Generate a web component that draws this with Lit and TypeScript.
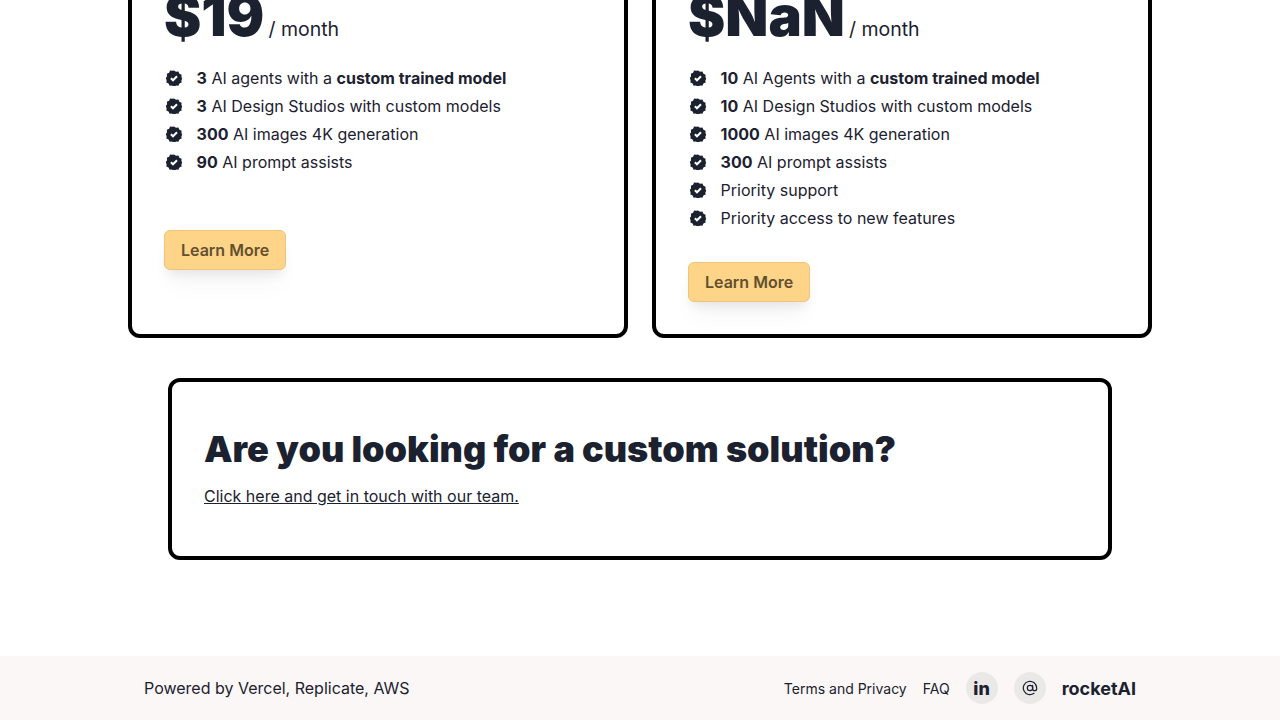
import { LitElement, html, css } from 'lit';
import { customElement } from 'lit/decorators.js';

type Feature = { lead?: string; text: string; strong?: string };

const basic: Feature[] = [
  { lead: '3', text: ' AI agents with a ', strong: 'custom trained model' },
  { lead: '3', text: ' AI Design Studios with custom models' },
  { lead: '300', text: ' AI images 4K generation' },
  { lead: '90', text: ' AI prompt assists' },
];

const pro: Feature[] = [
  { lead: '10', text: ' AI Agents with a ', strong: 'custom trained model' },
  { lead: '10', text: ' AI Design Studios with custom models' },
  { lead: '1000', text: ' AI images 4K generation' },
  { lead: '300', text: ' AI prompt assists' },
  { text: 'Priority support' },
  { text: 'Priority access to new features' },
];

// scalloped check badge
const badge = html`<svg class="check" viewBox="0 0 16 16" aria-hidden="true">
  <path
    fill="#1c2130"
    d="M8 0.4l2 1.4 2.4-.2 1 2.2 2.2 1-.2 2.4 1.2 1-1.2 2 .2 2.4-2.2 1-1 2.2-2.4-.2-2 1.4-2-1.4-2.4.2-1-2.2-2.2-1 .2-2.4L-.3 8.2l1.4-2-.2-2.4 2.2-1 1-2.2 2.4.2z"
  />
  <path d="M4.9 8.2l2.1 2.1 4-4.1" fill="none" stroke="#fff" stroke-width="2" />
</svg>`;

const atSign = html`<svg class="at" viewBox="0 0 24 24" aria-hidden="true">
  <circle cx="12" cy="12" r="4" />
  <path d="M16 8v5a3 3 0 0 0 6 0v-1a10 10 0 1 0-4 8" />
</svg>`;

@customElement('app-root')
export class AppRoot extends LitElement {
  static styles = css`
    :host {
      display: block;
      height: 720px;
      overflow: hidden;
      background: #fff;
      color: #1c2130;
      font-family: Inter, sans-serif;
      font-size: 16px;
    }

    .page {
      height: 720px;
      display: flex;
      flex-direction: column;
      align-items: center;
    }

    /* the page is photographed scrolled down, so the cards start above the fold */
    .plans {
      display: flex;
      gap: 24px;
      margin-top: -40px;
    }

    .card {
      box-sizing: border-box;
      width: 500px;
      height: 378px;
      border: 4px solid #000;
      border-radius: 12px;
      padding: 0 32px;
    }

    .price {
      display: flex;
      align-items: baseline;
      height: 68px;
      padding-top: 18px;
      line-height: 68px;
      font-size: 19.5px;
    }

    .price b {
      font-size: 56px;
      font-weight: 900;
      margin-right: 4px;
    }

    ul {
      list-style: none;
      margin: 14px 0 30px;
      padding: 0;
      min-height: 136px;
    }

    li {
      display: flex;
      align-items: center;
      height: 28px;
      white-space: pre;
    }

    li b {
      font-weight: 700;
    }

    .check {
      width: 16px;
      height: 16px;
      margin: 0 14.6px 0 2px;
      flex: none;
    }

    .btn {
      display: inline-block;
      box-sizing: border-box;
      height: 40px;
      padding: 0 16px;
      line-height: 38px;
      font-weight: 600;
      color: #62502f;
      background: #fdd488;
      border: 1px solid #f0c47a;
      border-radius: 6px;
      box-shadow: 0 20px 25px -5px rgba(0, 0, 0, 0.03), 0 8px 12px -4px rgba(0, 0, 0, 0.09);
    }

    .custom {
      box-sizing: border-box;
      width: 944px;
      height: 182px;
      margin-top: 40px;
      border: 4px solid #000;
      border-radius: 12px;
      padding: 44px 32px 0;
    }

    h2 {
      margin: 0 0 14px;
      font-size: 36px;
      line-height: 46px;
      font-weight: 900;
    }

    .custom a {
      color: inherit;
      text-decoration: underline;
    }

    footer {
      box-sizing: border-box;
      width: 100%;
      height: 64px;
      margin-top: auto;
      padding: 0 144px;
      display: flex;
      align-items: center;
      justify-content: space-between;
      background: #faf7f6;
    }

    .links {
      display: flex;
      align-items: center;
      gap: 16px;
      font-size: 14px;
    }

    .circle {
      width: 32px;
      height: 32px;
      border-radius: 50%;
      background: #ebe9e8;
      display: flex;
      align-items: center;
      justify-content: center;
    }

    .in {
      font-size: 18px;
      font-weight: 800;
    }

    .at {
      width: 16px;
      height: 16px;
      fill: none;
      stroke: #1c2130;
      stroke-width: 1.8;
      stroke-linecap: round;
      stroke-linejoin: round;
    }

    .brand {
      font-size: 18px;
      font-weight: 700;
    }
  `;

  private renderFeature(f: Feature) {
    return html`<li>
      ${badge}${f.lead ? html`<b>${f.lead}</b>` : ''}<span>${f.text}</span>${f.strong
        ? html`<b>${f.strong}</b>`
        : ''}
    </li>`;
  }

  private renderCard(price: string, features: Feature[]) {
    return html`<section class="card">
      <div class="price"><b>${price}</b> / month</div>
      <ul>
        ${features.map((f) => this.renderFeature(f))}
      </ul>
      <a class="btn">Learn More</a>
    </section>`;
  }

  render() {
    return html`<div class="page">
      <div class="plans">${this.renderCard('$19', basic)} ${this.renderCard('$NaN', pro)}</div>
      <section class="custom">
        <h2>Are you looking for a custom solution?</h2>
        <a>Click here and get in touch with our team.</a>
      </section>
      <footer>
        <span>Powered by Vercel, Replicate, AWS</span>
        <div class="links">
          <span>Terms and Privacy</span>
          <span>FAQ</span>
          <span class="circle in">in</span>
          <span class="circle">${atSign}</span>
          <span class="brand">rocketAI</span>
        </div>
      </footer>
    </div>`;
  }
}
